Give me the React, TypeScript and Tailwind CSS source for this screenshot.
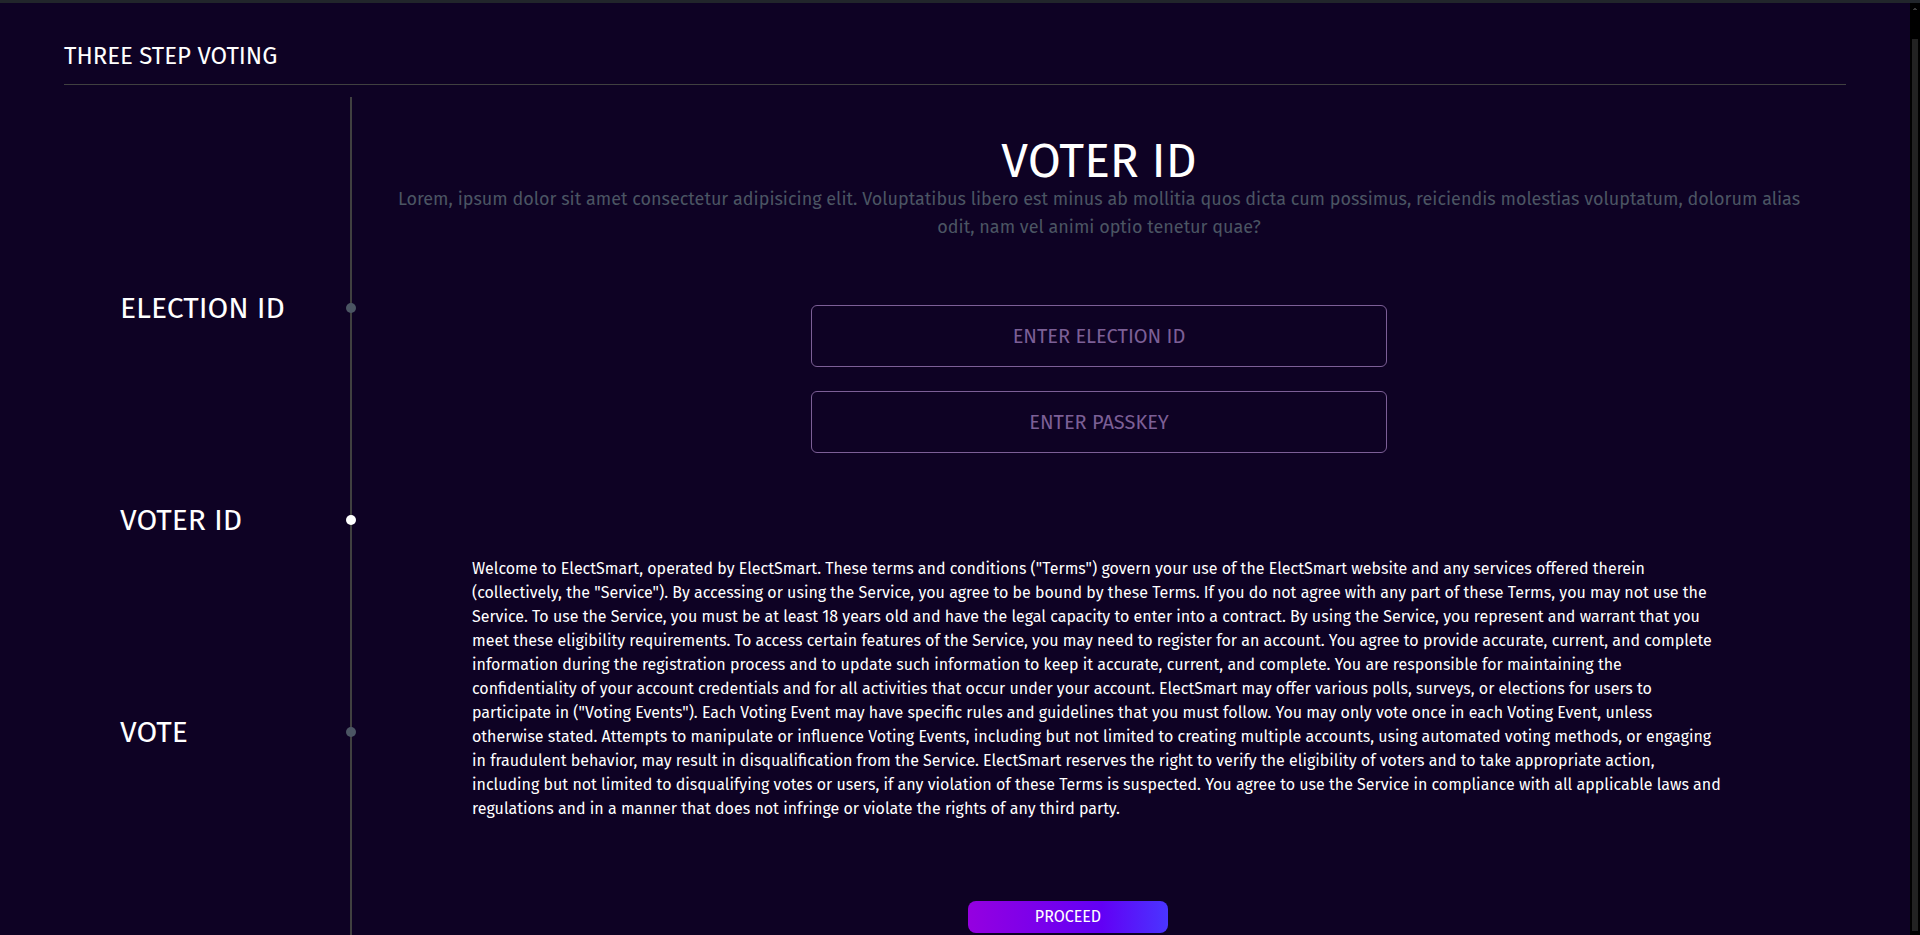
const TERMS =
  'Welcome to ElectSmart, operated by ElectSmart. These terms and conditions ("Terms") govern your use of the ElectSmart website and any services offered therein (collectively, the "Service"). By accessing or using the Service, you agree to be bound by these Terms. If you do not agree with any part of these Terms, you may not use the Service. To use the Service, you must be at least 18 years old and have the legal capacity to enter into a contract. By using the Service, you represent and warrant that you meet these eligibility requirements. To access certain features of the Service, you may need to register for an account. You agree to provide accurate, current, and complete information during the registration process and to update such information to keep it accurate, current, and complete. You are responsible for maintaining the confidentiality of your account credentials and for all activities that occur under your account. ElectSmart may offer various polls, surveys, or elections for users to participate in ("Voting Events"). Each Voting Event may have specific rules and guidelines that you must follow. You may only vote once in each Voting Event, unless otherwise stated. Attempts to manipulate or influence Voting Events, including but not limited to creating multiple accounts, using automated voting methods, or engaging in fraudulent behavior, may result in disqualification from the Service. ElectSmart reserves the right to verify the eligibility of voters and to take appropriate action, including but not limited to disqualifying votes or users, if any violation of these Terms is suspected. You agree to use the Service in compliance with all applicable laws and regulations and in a manner that does not infringe or violate the rights of any third party.';

const STEPS = [
  { label: "ELECTION ID", active: false },
  { label: "VOTER ID", active: true },
  { label: "VOTE", active: false },
];

const FIELD =
  "h-[62px] w-full rounded-md border border-[#7c5f96] bg-transparent text-center text-xl text-white outline-none placeholder:text-[#7c5f96]";

export default function App() {
  return (
    <div className="flex h-screen flex-col overflow-hidden bg-[#0e0224] font-['Fira_Sans','Noto_Sans',sans-serif] text-white">
      <div className="h-[3px] shrink-0 bg-[#21252b]" />
      <div className="flex min-h-0 flex-1">
        <main className="flex min-w-0 flex-1 flex-col px-16">
          <h2 className="mt-[37px] border-b border-[#404040] pb-3 text-2xl leading-8">THREE STEP VOTING</h2>
          <div className="mt-3 flex min-h-0 flex-1">
            <ol className="w-72 shrink-0 border-r-2 border-[#404040] pt-[105px]">
              {STEPS.map((s) => (
                <li key={s.label} className="flex h-[212px] items-center justify-between pl-14">
                  <span className="text-3xl">{s.label}</span>
                  <span
                    className={
                      s.active
                        ? "-mr-[6px] size-[10px] rounded-full bg-white"
                        : "-mr-[6px] size-[10px] rounded-full bg-[#4b5563]"
                    }
                  />
                </li>
              ))}
            </ol>
            <section className="flex min-w-0 flex-1 flex-col items-center">
              <h1 className="mt-10 text-5xl">VOTER ID</h1>
              <p className="px-8 text-center text-lg text-[#4b5563]">
                Lorem, ipsum dolor sit amet consectetur adipisicing elit. Voluptatibus libero est minus ab mollitia quos
                dicta cum possimus, reiciendis molestias voluptatum, dolorum alias odit, nam vel animi optio tenetur quae?
              </p>
              <form className="mt-16 flex w-full max-w-xl flex-col gap-6">
                <input className={FIELD} placeholder="ENTER ELECTION ID" aria-label="Election ID" />
                <input className={FIELD} placeholder="ENTER PASSKEY" aria-label="Passkey" />
              </form>
              <p className="mt-[104px] w-full px-[120px] text-base">{TERMS}</p>
              <button
                type="button"
                className="mt-20 mr-[62px] h-8 w-50 shrink-0 rounded-lg bg-linear-to-r/srgb from-[#9500e0] via-[#6200f5] via-67% to-[#4a35ff] text-base"
              >
                PROCEED
              </button>
            </section>
          </div>
        </main>
        <div className="flex w-[10px] shrink-0 flex-col items-center bg-black pb-1" aria-hidden="true">
          <svg className="mt-[5px] mb-[29px] h-[2px] w-1 shrink-0" viewBox="0 0 4 2">
            <path d="M1 0h2v1h1v1H0V1h1z" fill="#3a3a3a" />
          </svg>
          <div className="w-[6px] flex-1 bg-[#222222]" />
        </div>
      </div>
    </div>
  );
}
